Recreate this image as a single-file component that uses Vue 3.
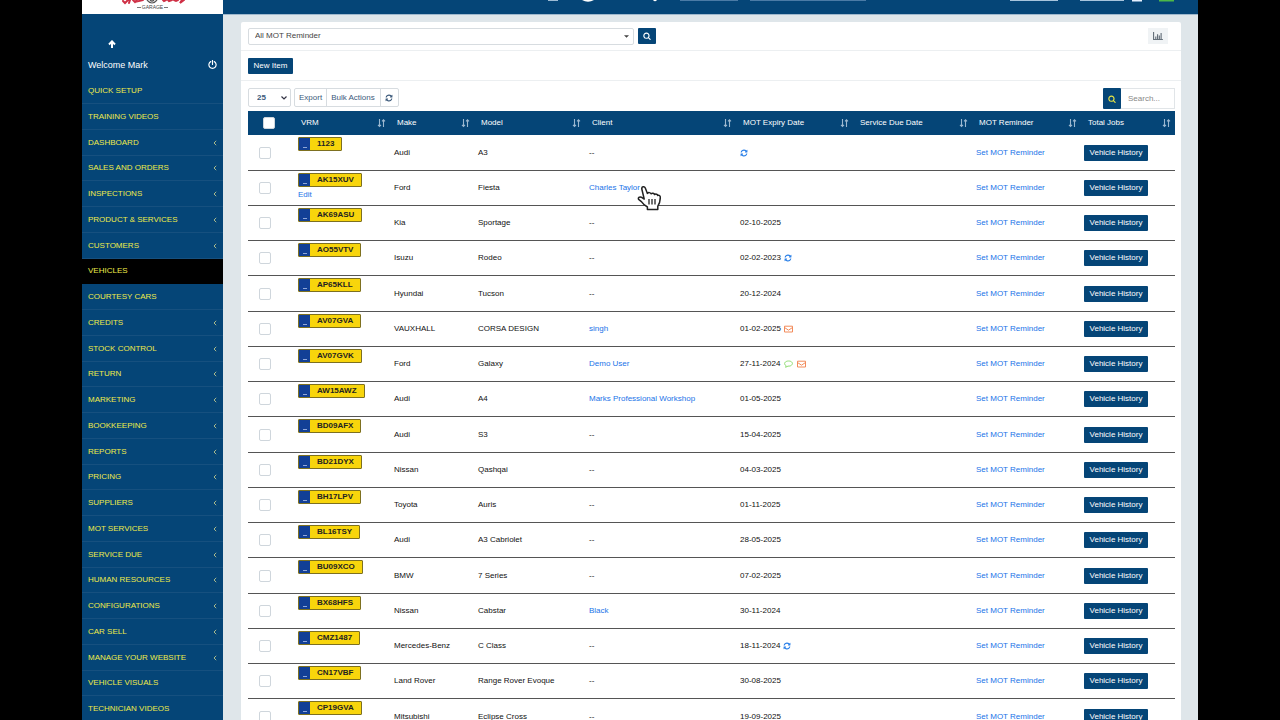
<script setup>
import { ref } from 'vue'

const menu = [
  ['QUICK SETUP', false], ['TRAINING VIDEOS', false], ['DASHBOARD', true], ['SALES AND ORDERS', true],
  ['INSPECTIONS', true], ['PRODUCT & SERVICES', true], ['CUSTOMERS', true], ['VEHICLES', false],
  ['COURTESY CARS', false], ['CREDITS', true], ['STOCK CONTROL', true], ['RETURN', true],
  ['MARKETING', true], ['BOOKKEEPING', true], ['REPORTS', true], ['PRICING', true],
  ['SUPPLIERS', true], ['MOT SERVICES', true], ['SERVICE DUE', true], ['HUMAN RESOURCES', true],
  ['CONFIGURATIONS', true], ['CAR SELL', true], ['MANAGE YOUR WEBSITE', true],
  ['VEHICLE VISUALS', false], ['TECHNICIAN VIDEOS', false],
].map(([label, sub]) => ({ label, sub }))

const columns = [
  { key: 'vrm', label: 'VRM' },
  { key: 'make', label: 'Make' },
  { key: 'model', label: 'Model' },
  { key: 'client', label: 'Client' },
  { key: 'expiry', label: 'MOT Expiry Date' },
  { key: 'service', label: 'Service Due Date' },
  { key: 'reminder', label: 'MOT Reminder' },
  { key: 'jobs', label: 'Total Jobs' },
]

const rows = [
  ['1123', 'Audi', 'A3', '', '', ['refresh']],
  ['AK15XUV', 'Ford', 'Fiesta', 'Charles Taylor', '', []],
  ['AK69ASU', 'Kia', 'Sportage', '', '02-10-2025', []],
  ['AO55VTV', 'Isuzu', 'Rodeo', '', '02-02-2023', ['refresh']],
  ['AP65KLL', 'Hyundai', 'Tucson', '', '20-12-2024', []],
  ['AV07GVA', 'VAUXHALL', 'CORSA DESIGN', 'singh', '01-02-2025', ['mail']],
  ['AV07GVK', 'Ford', 'Galaxy', 'Demo User', '27-11-2024', ['chat', 'mail']],
  ['AW15AWZ', 'Audi', 'A4', 'Marks Professional Workshop', '01-05-2025', []],
  ['BD09AFX', 'Audi', 'S3', '', '15-04-2025', []],
  ['BD21DYX', 'Nissan', 'Qashqai', '', '04-03-2025', []],
  ['BH17LPV', 'Toyota', 'Auris', '', '01-11-2025', []],
  ['BL16TSY', 'Audi', 'A3 Cabriolet', '', '28-05-2025', []],
  ['BU09XCO', 'BMW', '7 Series', '', '07-02-2025', []],
  ['BX68HFS', 'Nissan', 'Cabstar', 'Black', '30-11-2024', []],
  ['CMZ1487', 'Mercedes-Benz', 'C Class', '', '18-11-2024', ['refresh']],
  ['CN17VBF', 'Land Rover', 'Range Rover Evoque', '', '30-08-2025', []],
  ['CP19GVA', 'Mitsubishi', 'Eclipse Cross', '', '19-09-2025', []],
].map(([vrm, make, model, client, expiry, icons]) => ({ vrm, make, model, client, expiry, icons }))

const hovered = ref('AK15XUV')

const searchPath = 'M1216 832q0-185-131.5-316.5T768 384 451.5 515.5 320 832t131.5 316.5T768 1280t316.5-131.5T1216 832zm512 832q0 52-38 90t-90 38q-54 0-90-38l-343-342q-179 124-399 124-143 0-273.5-55.5t-225-150-150-225T64 832t55.5-273.5 150-225 225-150T768 128t273.5 55.5 225 150 150 225T1472 832q0 220-124 399l343 343q37 37 37 90z'
const refreshPath = 'M1639 1056q0 5-1 7-64 268-268 434.5t-478 166.5q-146 0-282.5-55t-243.5-157l-129 129q-19 19-45 19t-45-19-19-45v-448q0-26 19-45t45-19h448q26 0 45 19t19 45-19 45l-137 137q71 66 161 102t187 36q134 0 250-65t186-179q11-17 53-117 8-23 30-23h192q13 0 22.5 9.5t9.5 22.5zm25-800v448q0 26-19 45t-45 19h-448q-26 0-45-19t-19-45 19-45l138-138q-148-137-349-137-134 0-250 65t-186 179q-11 17-53 117-8 23-30 23h-199q-13 0-22.5-9.5t-9.5-22.5v-7q65-268 270-434.5t480-166.5q146 0 284 55.5t245 156.5l130-129q19-19 45-19t45 19 19 45z'
</script>

<template>
  <div class="shell">
    <aside class="sidebar">
      <div class="logo">
        <svg class="script" viewBox="0 0 66 5" aria-hidden="true">
          <g fill="none" stroke="#cf2f45" stroke-width="2" stroke-linecap="round">
            <path d="M3 1L5 3L8 0M10 0L9 3M13 0L15 2L17 0M20 0L19 1L23 0M43 0L44 1L46 0M48 0L49 1L52 0M54 0L56 1L58 0M62 0L60 3L64 0" />
          </g>
          <path d="M27 0Q32 6 37 0M30 0Q32 2 34 0" fill="none" stroke="#555" stroke-width="1.2" />
        </svg>
        <span class="logo-name">GARAGE</span>
      </div>
      <div class="collapse">
        <button type="button" class="plain" aria-label="Scroll up">
          <svg class="i8" viewBox="0 0 8 8"><path d="M4 8V2M1 4.5L4 1.4L7 4.5" fill="none" stroke="#fff" stroke-width="2" /></svg>
        </button>
      </div>
      <div class="welcome">
        <span>Welcome Mark</span>
        <button type="button" class="plain" aria-label="Log out">
          <svg class="i9" viewBox="0 0 10 10"><path d="M3 1.8A4 4 0 1 0 7 1.8M5 .4V5" fill="none" stroke="#fff" stroke-width="1.3" stroke-linecap="round" /></svg>
        </button>
      </div>
      <nav class="menu">
        <a v-for="m in menu" :key="m.label" href="#" :class="{ active: m.label === 'VEHICLES' }">
          <span>{{ m.label }}</span>
          <svg v-if="m.sub" class="chev" viewBox="0 0 4 6"><path d="M3.2 .8L1 3L3.2 5.2" fill="none" stroke="#a9b98c" stroke-width="1" /></svg>
        </a>
      </nav>
    </aside>

    <div class="main">
      <header class="topbar">
        <svg class="topicons" viewBox="0 0 650 3" aria-hidden="true">
          <path d="M0 0H10" stroke="#9dbbd4" stroke-width="2" />
          <path d="M34 0Q40 3.5 46 0Z" fill="#fff" />
          <path d="M105 0Q107 2.5 109 0Z" fill="#fff" />
          <path d="M132 0H190M202 0H318" stroke="#4b7ba6" stroke-width="2" />
          <path d="M462 0H510M532 0H576" stroke="#a7c4dc" stroke-width="2" />
          <path d="M584 0H594" stroke="#e5f0ff" stroke-width="3" />
          <path d="M611 0H626" stroke="#4db848" stroke-width="3" />
        </svg>
      </header>

      <main class="card">
        <div class="bar filter">
          <select class="view" aria-label="Saved view"><option>All MOT Reminder</option></select>
          <button type="button" class="solid square" aria-label="Apply view">
            <svg class="i8" viewBox="0 0 1792 1792"><path :d="searchPath" fill="#fff" /></svg>
          </button>
          <button type="button" class="chart" aria-label="Chart">
            <svg viewBox="0 0 11 9"><path d="M.5 0V8.5H11M3 8V5M5 8V2.5M7 8V4M9 8V1" fill="none" stroke="#66717b" stroke-width="1.3" /></svg>
          </button>
        </div>
        <div class="bar">
          <button type="button" class="solid new">New Item</button>
        </div>
        <div class="tools">
          <select class="count" aria-label="Rows per page"><option>25</option></select>
          <div class="group">
            <button type="button">Export</button>
            <button type="button">Bulk Actions</button>
            <button type="button" aria-label="Refresh">
              <svg class="i8" viewBox="0 0 1792 1792"><path :d="refreshPath" fill="#3c5a7b" /></svg>
            </button>
          </div>
          <form class="search" @submit.prevent>
            <button type="submit" class="solid" aria-label="Search">
              <svg class="i8" viewBox="0 0 1792 1792"><path :d="searchPath" fill="#e8e545" /></svg>
            </button>
            <input type="text" placeholder="Search..." aria-label="Search vehicles" />
          </form>
        </div>

        <table>
          <colgroup>
            <col class="c-check" />
            <col v-for="c in columns" :key="c.key" :class="'c-' + c.key" />
          </colgroup>
          <thead>
            <tr>
              <th class="check"><input type="checkbox" aria-label="Select all" /></th>
              <th v-for="c in columns" :key="c.key" scope="col">
                <button type="button" class="sort">
                  <span>{{ c.label }}</span>
                  <svg viewBox="0 0 9 9"><path d="M2.5 0V7M1 5.8L2.5 7.4L4 5.8M6.5 8V1M5 2.4L6.5 .8L8 2.4" fill="none" stroke="#9db8d0" stroke-width="1.1" /></svg>
                </button>
              </th>
            </tr>
          </thead>
          <tbody>
            <tr v-for="r in rows" :key="r.vrm">
              <td class="check"><input type="checkbox" :aria-label="'Select ' + r.vrm" /></td>
              <td class="vrm">
                <span class="plate"><i></i><b>{{ r.vrm }}</b></span>
                <a v-if="hovered === r.vrm" class="edit" href="#">Edit</a>
              </td>
              <td>{{ r.make }}</td>
              <td>{{ r.model }}</td>
              <td class="client">
                <a v-if="r.client" href="#">{{ r.client }}</a>
                <template v-else>--</template>
                <svg v-if="hovered === r.vrm" class="pointer" viewBox="0 0 24 26" aria-hidden="true">
                  <path d="M4.8 4C4.4 1.6 7.4 .8 8.3 3L10.4 8.4C11.4 7.2 13.4 7.4 14 8.8C15.2 7.8 17 8.2 17.5 9.5C18.8 8.7 20.4 9.2 20.8 10.4C22.4 9.9 23.4 11 23.3 12.6C23.2 16.5 22.6 18.8 20.8 21.2V24.6H10.4V22C7.5 20.2 5.6 18.4 4.4 16.6L1.6 14.4C.8 12.8 2.4 11.4 4.2 12.2L7.2 14Z" fill="#fff" stroke="#222" stroke-width="1.5" stroke-linejoin="round" />
                  <path d="M12 14V19.5M15 14V19.5M18 14V19.5" stroke="#222" stroke-width="1.3" />
                </svg>
              </td>
              <td>
                <span class="expiry">
                  <span v-if="r.expiry">{{ r.expiry }}</span>
                  <template v-for="k in r.icons" :key="k">
                    <svg v-if="k === 'refresh'" class="i8" viewBox="0 0 1792 1792"><path :d="refreshPath" fill="#2b80e8" /></svg>
                    <svg v-else-if="k === 'mail'" class="mail" viewBox="0 0 9 8"><path d="M.5 1.2H8.5V7H.5ZM.5 2.5L4.5 5.2L8.5 2.5" fill="none" stroke="#f28b5b" stroke-width="1" stroke-linejoin="round" /></svg>
                    <svg v-else class="chat" viewBox="0 0 9 8"><path d="M2.2 5.8C-1 4 1 1 4.5 1S9.5 3.4 7.5 5.2C6.6 6 5.4 6.2 4 6.1L1.6 7.3Z" fill="none" stroke="#8fdc73" stroke-width="1" stroke-linejoin="round" /></svg>
                  </template>
                </span>
              </td>
              <td></td>
              <td><a href="#">Set MOT Reminder</a></td>
              <td class="jobs"><button type="button" class="solid history">Vehicle History</button></td>
            </tr>
          </tbody>
        </table>
      </main>
    </div>
  </div>
</template>

<style>
html, body { margin: 0; background: #000; overflow: hidden; }
</style>

<style scoped>
.shell {
  display: flex;
  height: 100vh;
  margin: 0 82px;
  overflow: hidden;
  background: #dfe6ea;
  font: 8px/10px "Liberation Sans", Arial, sans-serif;
  color: #111;
}
* { box-sizing: border-box; }
button, input, select { font: inherit; color: inherit; margin: 0; padding: 0; }
button { border: 0; background: none; display: flex; align-items: center; justify-content: center; }
a { color: #1a73e8; text-decoration: none; }
svg { display: block; flex: none; }
.i8 { width: 8px; height: 8px; }
.i9 { width: 9px; height: 9px; }

.sidebar { flex: 0 0 141px; background: #054577; }
.logo { height: 14px; background: #fff; display: flex; flex-direction: column; align-items: center; }
.script { width: 66px; height: 5px; }
.logo-name { display: flex; align-items: center; gap: 1px; font-size: 5px; line-height: 5px; color: #444; }
.logo-name::before, .logo-name::after { content: ""; width: 4px; height: 1px; background: #777; }
.collapse { padding: 26px 26px 0; }
.welcome { display: flex; justify-content: space-between; align-items: flex-start; padding: 12px 6px 0; height: 30px; font-size: 9px; color: #fff; }
.menu a { display: flex; align-items: center; justify-content: space-between; height: 26px; padding: 0 6px; border-bottom: 1px solid #16507f; color: #eeeb4a; }
.menu a:nth-child(4n) { height: 25px; }
.menu a.active { background: #000; border-color: #000; }
.chev { width: 4px; height: 6px; }

.main { flex: 1; min-width: 0; }
.topbar { height: 15px; background: #054577; border-bottom: 1px solid #9fb8cd; display: flex; justify-content: flex-end; }
.topicons { width: 650px; height: 3px; }
.card { margin: 7px 17px 0 18px; background: #fff; border-radius: 2px 2px 0 0; }
.bar { display: flex; align-items: center; height: 30px; padding: 0 7px; border-bottom: 1px solid #eceff1; }
.filter { height: 29px; }
.solid { background: #054577; color: #fff; border-radius: 1px; }
select { appearance: none; border: 1px solid #d7dce0; border-radius: 2px; background-color: #fff; background-repeat: no-repeat; }
.view {
  width: 386px; height: 17px; padding-left: 6px; margin-right: 4px; color: #444;
  background-image: url("data:image/svg+xml,%3Csvg xmlns='http://www.w3.org/2000/svg' viewBox='0 0 6 3'%3E%3Cpath d='M0 0h6L3 3z' fill='%23444'/%3E%3C/svg%3E");
  background-size: 5px 3px; background-position: right 4px center;
}
.square { width: 18px; height: 16px; }
.chart { margin-left: auto; margin-right: 6px; width: 20px; height: 16px; background: #f0f3f5; }
.chart svg { width: 10px; height: 8px; }
.new { height: 16px; width: 45px; }

.tools { display: flex; align-items: flex-start; padding: 7px 6px 2px 7px; height: 30px; color: #3c5a7b; }
.count {
  width: 43px; height: 19px; padding-left: 8px; margin-right: 3px; font-weight: bold;
  background-image: url("data:image/svg+xml,%3Csvg xmlns='http://www.w3.org/2000/svg' viewBox='0 0 6 4'%3E%3Cpath d='M.5.5L3 3 5.5.5' fill='none' stroke='%23334' stroke-width='1.2'/%3E%3C/svg%3E");
  background-size: 6px 4px; background-position: right 3px center;
}
.group { display: flex; height: 19px; border: 1px solid #d7dce0; border-radius: 2px; }
.group button { padding: 0 4px; }
.group button + button { border-left: 1px solid #d7dce0; padding: 0 5px 0 4px; }
.search { display: flex; margin: 0 0 0 auto; height: 21px; }
.search button { width: 18px; }
.search input { width: 54px; padding: 0 7px; border: 1px solid #e1e5e8; border-left: 0; outline: 0; }
.search input::placeholder { color: #888; opacity: 1; }

table { width: calc(100% - 13px); margin-left: 7px; table-layout: fixed; border-collapse: separate; border-spacing: 0; }
.c-check { width: 46px; }
.c-vrm { width: 96px; }
.c-make { width: 84px; }
.c-model { width: 111px; }
.c-client { width: 151px; }
.c-expiry { width: 117px; }
.c-service { width: 119px; }
.c-reminder { width: 109px; }
.c-jobs { width: 94px; }
th { height: 24px; padding: 0 4px 0 7px; background: #054577; color: #fff; text-align: left; font-weight: normal; }
.sort { width: 100%; justify-content: space-between; }
.sort svg { width: 9px; height: 9px; }
td { height: 35px; padding: 0 4px; border-bottom: 1px solid #555; white-space: nowrap; }
tbody tr:nth-child(4n + 1) td { height: 36px; }
th.check { padding: 0 0 0 15px; }
td.check { padding: 0 0 0 11px; }
td.jobs { padding: 0 3px; }
.check input { appearance: none; display: block; width: 12px; height: 12px; border: 1px solid #cfd6dc; border-radius: 2px; background: #fff; }
td.vrm { vertical-align: top; padding-top: 2px; }
.plate { display: flex; width: max-content; height: 14px; border: 1px solid #7d7020; border-radius: 1px; background: #f8d50c; color: #222; line-height: 12px; }
.plate i { display: flex; align-items: flex-end; justify-content: center; width: 11px; padding-bottom: 2px; background: #123f96; }
.plate i::after { content: ""; width: 4px; height: 1px; background: #8fa6d8; }
.plate b { padding: 0 7px; }
.edit { display: block; margin-top: 3px; }
.client { position: relative; }
.pointer { position: absolute; left: 52px; top: 14px; width: 24px; height: 26px; z-index: 1; }
.expiry { display: flex; align-items: center; gap: 3px; }
.mail { width: 9px; height: 8px; }
.chat { width: 9px; height: 8px; margin: 0 1px; }
.history { width: 64px; height: 16px; }
.plain { padding: 0; }
</style>
